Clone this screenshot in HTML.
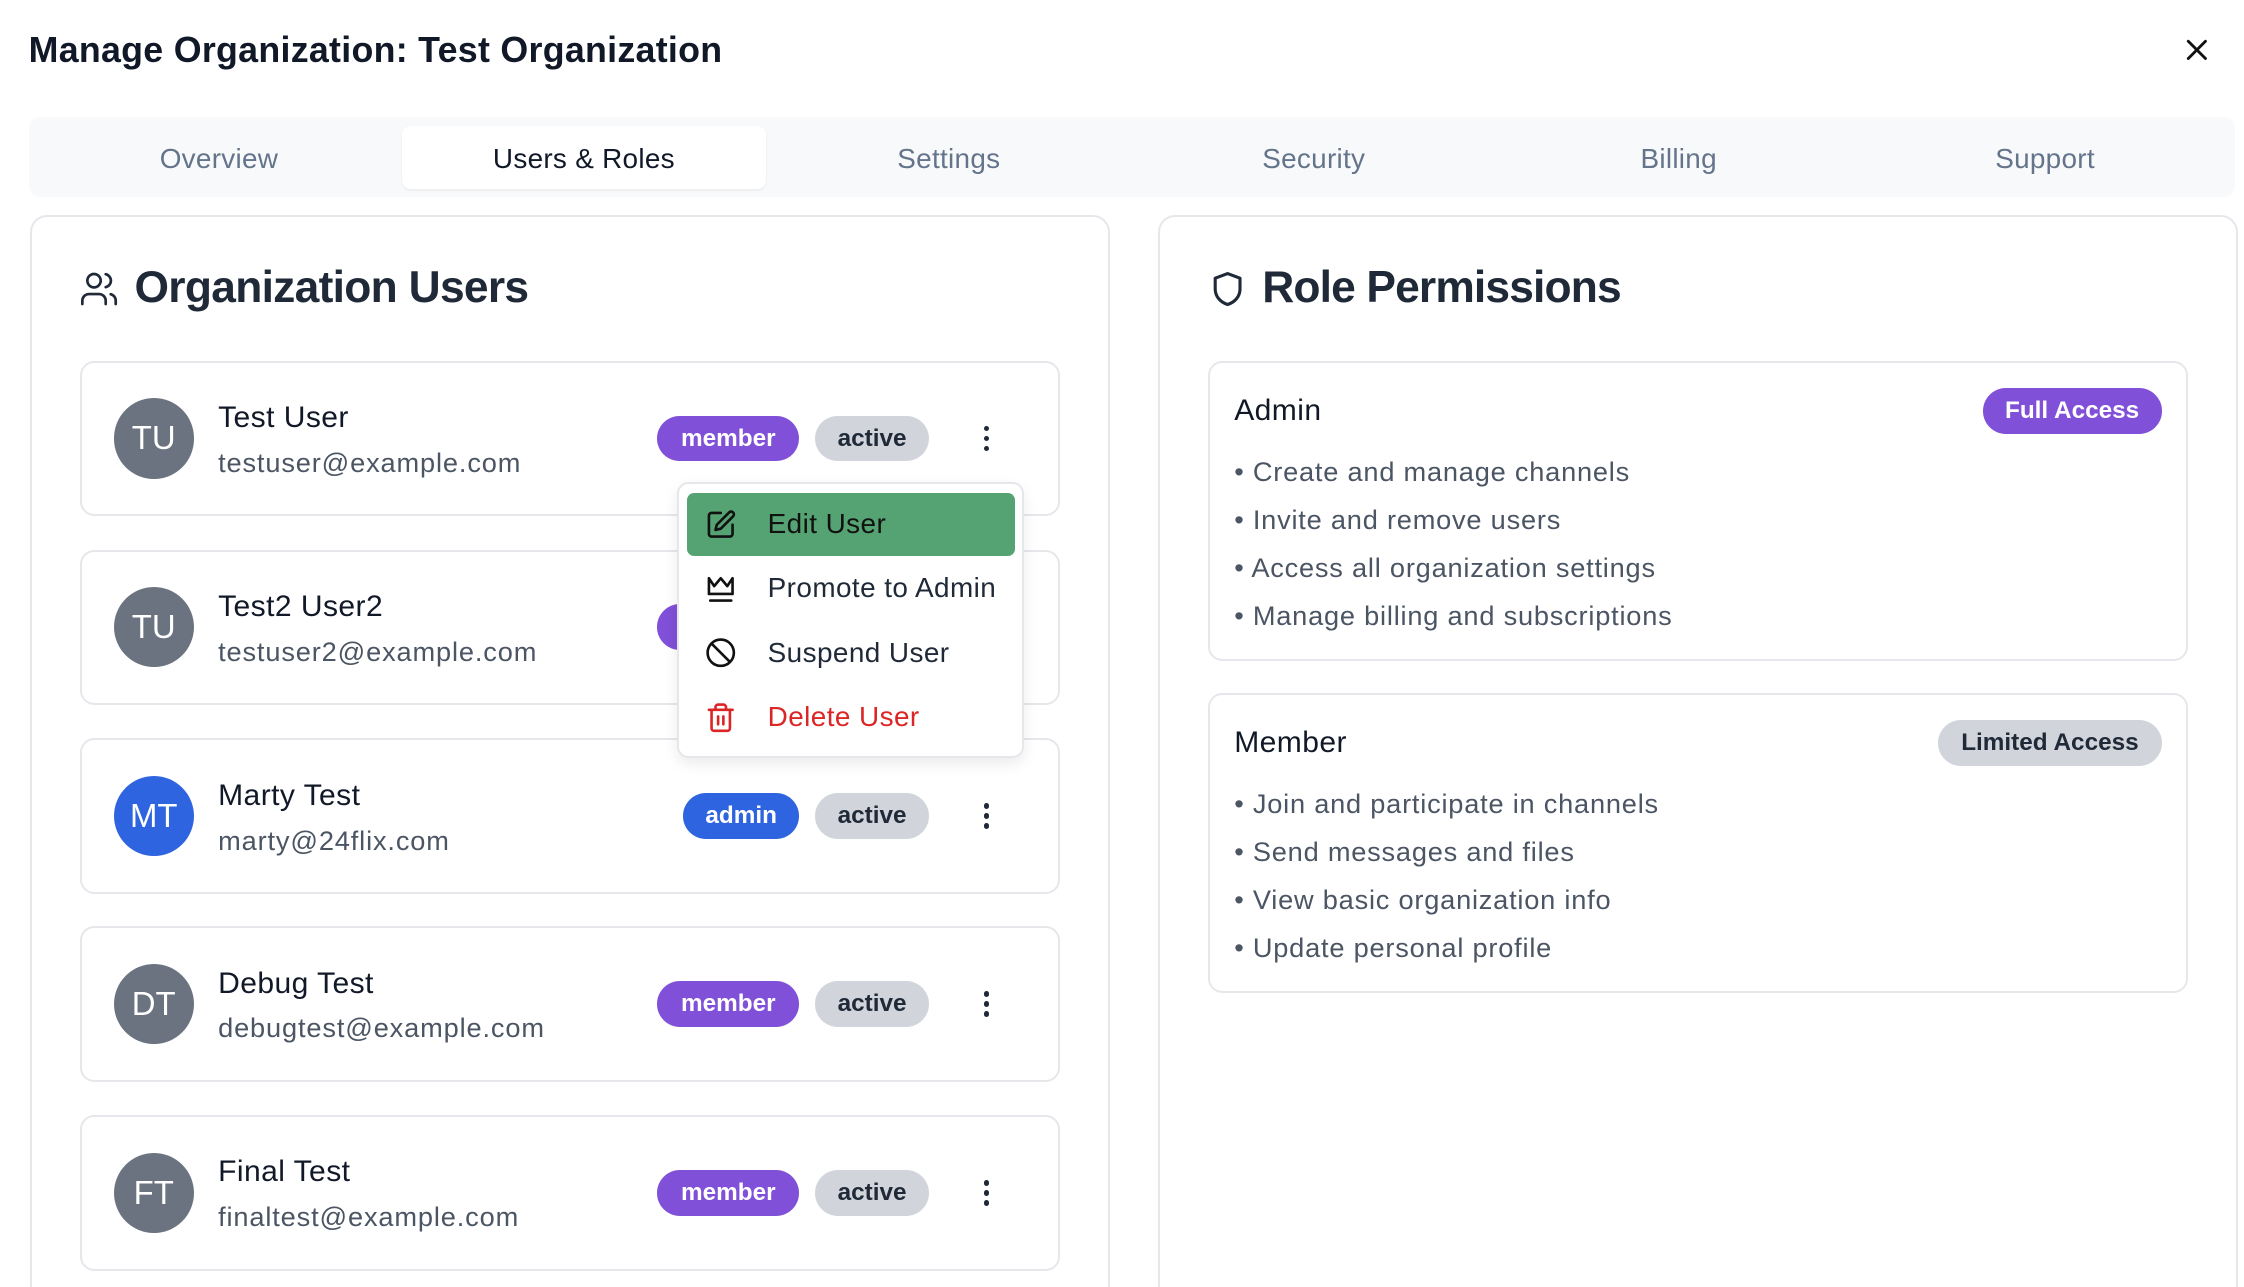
<!DOCTYPE html>
<html><head><meta charset="utf-8">
<style>
html,body{margin:0;padding:0;background:#fff;overflow:hidden;width:2244px;height:1286px}
#w{position:absolute;left:0;top:0;width:1568px;height:899px;overflow:hidden;zoom:1.43112;font-family:"Liberation Sans",sans-serif;color:#111827}
.a{position:absolute}
.t{white-space:nowrap}
.card{position:absolute;border:1.5px solid #e5e7eb;border-radius:12px;background:#fff}
.row{position:absolute;left:56px;width:682px;height:106px;border:1.5px solid #e5e7eb;border-radius:10px;background:#fff}
.av{position:absolute;left:22px;top:25px;width:56px;height:56px;border-radius:50%;background:#6b7280;color:#fff;font-size:23px;text-align:center;line-height:56px}
.nm{position:absolute;left:95px;top:27px;font-size:21px;color:#111827;letter-spacing:0.3px}
.em{position:absolute;left:95px;top:59px;font-size:19px;color:#4b5563;letter-spacing:0.6px}
.pill{position:absolute;top:37px;height:32px;border-radius:16px;font-size:17px;font-weight:bold;text-align:center;line-height:32px}
.mem{left:402px;width:99px;background:#8050d8;color:#fff}
.act{left:512px;width:80px;background:#d1d5db;color:#1f2937}
.adm{left:420px;width:81px;background:#2f64e0;color:#fff}
.keb{position:absolute;left:630px;top:44px;width:4px}
.keb i{display:block;width:4px;height:4px;border-radius:2px;background:#1f2937;margin-bottom:3px}
.tab{position:absolute;top:88px;width:254px;height:44px;line-height:46px;text-align:center;font-size:19.5px;color:#64748b;letter-spacing:0.2px}
.li{position:absolute;left:17px;font-size:19px;color:#4b5563;letter-spacing:0.55px}
.mi{position:absolute;left:6px;width:229px;height:44px;font-size:19.5px;line-height:44px;letter-spacing:0.3px}
.mi span{position:absolute;left:56px}
.mi svg{position:absolute;left:12px;top:11px}
</style></head><body><div id="w">
<div class="a t" style="left:20px;top:21px;font-size:25px;font-weight:bold;letter-spacing:0.2px">Manage Organization: Test Organization</div>
<svg class="a" style="left:1526px;top:26px" width="18" height="18" viewBox="0 0 18 18"><path d="M3 3L15 15M15 3L3 15" stroke="#111" stroke-width="2" stroke-linecap="round"/></svg>

<div class="a" style="left:20px;top:82px;width:1542px;height:56px;background:#f8f9fb;border-radius:8px"></div>
<div class="a" style="left:281px;top:88px;width:254px;height:44px;background:#fff;border-radius:6px;box-shadow:0 1px 2px rgba(0,0,0,.06)"></div>
<div class="tab" style="left:26px">Overview</div>
<div class="tab" style="left:281px;color:#111827">Users &amp; Roles</div>
<div class="tab" style="left:536px">Settings</div>
<div class="tab" style="left:791px">Security</div>
<div class="tab" style="left:1046px">Billing</div>
<div class="tab" style="left:1302px">Support</div>

<div class="card" style="left:21px;top:150px;width:752px;height:800px"></div>
<svg class="a" style="left:55px;top:188px" width="28" height="28" viewBox="0 0 24 24" fill="none" stroke="#1f2937" stroke-width="1.6" stroke-linecap="round"><circle cx="9" cy="7" r="4"/><path d="M2 21v-2a4 4 0 0 1 4-4h6a4 4 0 0 1 4 4v2"/><path d="M16 3.1a4 4 0 0 1 0 7.8"/><path d="M22 21v-2a4 4 0 0 0-3-3.9"/></svg>
<div class="a t" style="left:94px;top:184px;font-size:31px;font-weight:bold;letter-spacing:-0.5px;color:#1f2937">Organization Users</div>

<div class="row" style="top:252px"><div class="av">TU</div><div class="nm">Test User</div><div class="em">testuser@example.com</div><div class="pill mem">member</div><div class="pill act">active</div><div class="keb"><i></i><i></i><i></i></div></div>
<div class="row" style="top:384px"><div class="av">TU</div><div class="nm">Test2 User2</div><div class="em">testuser2@example.com</div><div class="pill mem">member</div><div class="pill act">active</div><div class="keb"><i></i><i></i><i></i></div></div>
<div class="row" style="top:516px"><div class="av" style="background:#2f64e0">MT</div><div class="nm">Marty Test</div><div class="em">marty@24flix.com</div><div class="pill adm">admin</div><div class="pill act">active</div><div class="keb"><i></i><i></i><i></i></div></div>
<div class="row" style="top:647px"><div class="av">DT</div><div class="nm">Debug Test</div><div class="em">debugtest@example.com</div><div class="pill mem">member</div><div class="pill act">active</div><div class="keb"><i></i><i></i><i></i></div></div>
<div class="row" style="top:779px"><div class="av">FT</div><div class="nm">Final Test</div><div class="em">finaltest@example.com</div><div class="pill mem">member</div><div class="pill act">active</div><div class="keb"><i></i><i></i><i></i></div></div>

<div class="a" style="left:473px;top:337px;width:240px;height:190px;background:#fff;border:1.5px solid #e5e7eb;border-radius:8px;box-shadow:0 4px 10px rgba(0,0,0,.08)">
 <div class="mi" style="top:6px;background:#55a372;border-radius:5px;color:#111"><svg width="22" height="22" viewBox="0 0 24 24" fill="none" stroke="#111" stroke-width="2" stroke-linecap="round" stroke-linejoin="round"><path d="M12 3H5a2 2 0 0 0-2 2v14a2 2 0 0 0 2 2h14a2 2 0 0 0 2-2v-7"/><path d="M18.4 2.6a2.1 2.1 0 0 1 3 3L12 15l-4 1 1-4z"/></svg><span>Edit User</span></div>
 <div class="mi" style="top:51px;color:#1f2937"><svg width="22" height="22" viewBox="0 0 24 24" fill="none" stroke="#111" stroke-width="2" stroke-linecap="round" stroke-linejoin="round"><path d="M3 4l4 6 5-6 5 6 4-6v12H3z"/><path d="M4 21h16"/></svg><span>Promote to Admin</span></div>
 <div class="mi" style="top:96px;color:#1f2937"><svg width="22" height="22" viewBox="0 0 24 24" fill="none" stroke="#111" stroke-width="2"><circle cx="12" cy="12" r="10"/><path d="M5 5l14 14"/></svg><span>Suspend User</span></div>
 <div class="mi" style="top:141px;color:#dc2626"><svg width="22" height="22" viewBox="0 0 24 24" fill="none" stroke="#dc2626" stroke-width="2" stroke-linecap="round"><path d="M3 6h18M19 6v14a2 2 0 0 1-2 2H7a2 2 0 0 1-2-2V6M8 6V4a2 2 0 0 1 2-2h4a2 2 0 0 1 2 2v2M10 11v6M14 11v6"/></svg><span>Delete User</span></div>
</div>

<div class="card" style="left:809px;top:150px;width:752px;height:800px"></div>
<svg class="a" style="left:845px;top:188px" width="26" height="28" viewBox="0 0 24 24" fill="none" stroke="#1f2937" stroke-width="2" stroke-linejoin="round"><path d="M12 2l8 3v7c0 5-3.5 8.5-8 10-4.5-1.5-8-5-8-10V5z"/></svg>
<div class="a t" style="left:882px;top:184px;font-size:31px;font-weight:bold;letter-spacing:-0.6px;color:#1f2937">Role Permissions</div>

<div class="card" style="left:844px;top:252px;width:682px;height:207px;border-radius:10px">
 <div class="a t" style="left:17px;top:22px;font-size:21px;letter-spacing:0.3px">Admin</div>
 <div class="pill" style="left:540px;top:18px;width:125px;background:#8050d8;color:#fff">Full Access</div>
 <div class="li t" style="top:65px">• Create and manage channels</div>
 <div class="li t" style="top:99px">• Invite and remove users</div>
 <div class="li t" style="top:132px">• Access all organization settings</div>
 <div class="li t" style="top:166px">• Manage billing and subscriptions</div>
</div>
<div class="card" style="left:844px;top:484px;width:682px;height:207px;border-radius:10px">
 <div class="a t" style="left:17px;top:22px;font-size:21px;letter-spacing:0.3px">Member</div>
 <div class="pill" style="left:509px;top:18px;width:156px;background:#d1d5db;color:#1f2937">Limited Access</div>
 <div class="li t" style="top:65px">• Join and participate in channels</div>
 <div class="li t" style="top:99px">• Send messages and files</div>
 <div class="li t" style="top:132px">• View basic organization info</div>
 <div class="li t" style="top:166px">• Update personal profile</div>
</div>
</div></body></html>
